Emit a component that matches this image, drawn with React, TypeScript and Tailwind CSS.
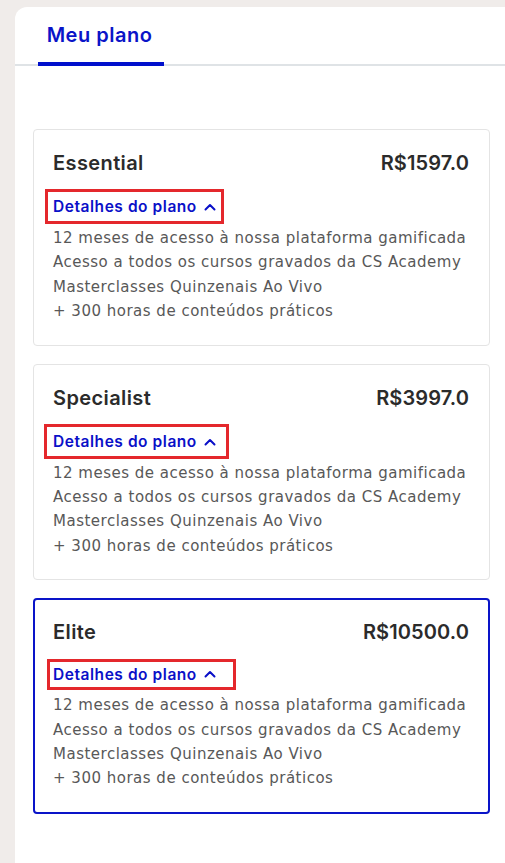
import React from "react";

const features = [
  "12 meses de acesso à nossa plataforma gamificada",
  "Acesso a todos os cursos gravados da CS Academy",
  "Masterclasses Quinzenais Ao Vivo",
  "+ 300 horas de conteúdos práticos",
];

type Plan = {
  name: string;
  price: string;
  selected?: boolean;
  box: { left: number; top: number; width: number; height: number };
};

const plans: Plan[] = [
  { name: "Essential", price: "R$1597.0", box: { left: -8, top: -18, width: 179, height: 35 } },
  { name: "Specialist", price: "R$3997.0", box: { left: -9, top: -18, width: 185, height: 35 } },
  { name: "Elite", price: "R$10500.0", selected: true, box: { left: -6, top: -15, width: 189, height: 31 } },
];

function Chevron() {
  return (
    <svg width="12" height="8" viewBox="0 0 12 8" className="ml-[7px]" fill="none">
      <path d="M1.5 6.5 L6 2 L10.5 6.5" stroke="#0a10c8" strokeWidth="2" strokeLinecap="round" strokeLinejoin="round" />
    </svg>
  );
}

function PlanCard({ plan }: { plan: Plan }) {
  return (
    <div
      className={
        "rounded-[4px] bg-white " +
        (plan.selected
          ? "border-2 border-[#0a14c8] pl-[18px] pr-[19px] pt-[18px] pb-[21px]"
          : "border border-[#e4e4e4] pl-[19px] pr-5 pt-[19px] pb-[21px]")
      }
    >
      <div className="flex items-center justify-between h-[28px] text-[20px] font-semibold text-[#2b2b2b]">
        <span className="tracking-[0.4px]">{plan.name}</span>
        <span className="tracking-[0.1px]">{plan.price}</span>
      </div>
      <div className={"relative h-[24px] flex items-center " + (plan.selected ? "mt-[16px]" : "mt-[18px]")}>
        <div
          className="absolute border-[3px] border-[#e4282c]"
          style={{ left: plan.box.left, top: plan.box.top + 12, width: plan.box.width, height: plan.box.height }}
        />
        <span className="text-[15.5px] font-semibold tracking-[0.55px] text-[#0a10c8]">Detalhes do plano</span>
        <Chevron />
      </div>
      <div
        className="mt-[7px] text-[15px] tracking-[0.5px] leading-[24.4px] text-[#585858]"
        style={{ fontFamily: "'DejaVu Sans', sans-serif" }}
      >
        {features.map((f) => (
          <div key={f}>{f}</div>
        ))}
      </div>
    </div>
  );
}

export default function App() {
  return (
    <div
      className="min-h-[863px] bg-[#f0ecea] pl-[15px] pt-[7px]"
      style={{ fontFamily: "Inter, 'Noto Sans', sans-serif" }}
    >
      <div className="min-h-[856px] bg-white rounded-tl-[12px]">
        <div className="border-b-2 border-[#dfe3e6] h-[59px] flex pl-[23px]">
          <div className="relative flex flex-col items-center w-[126px]">
            <span className="mt-[15px] -ml-[3px] text-[20px] font-semibold tracking-[0.5px] text-[#0a14c8] leading-[26px]">
              Meu plano
            </span>
            <div className="absolute -bottom-[2px] left-0 right-0 h-[4px] bg-[#0010cc]" />
          </div>
        </div>
        <div className="pl-[18px] pr-[15px] pt-[63px] flex flex-col gap-[18px]">
          {plans.map((p) => (
            <PlanCard key={p.name} plan={p} />
          ))}
        </div>
      </div>
    </div>
  );
}
